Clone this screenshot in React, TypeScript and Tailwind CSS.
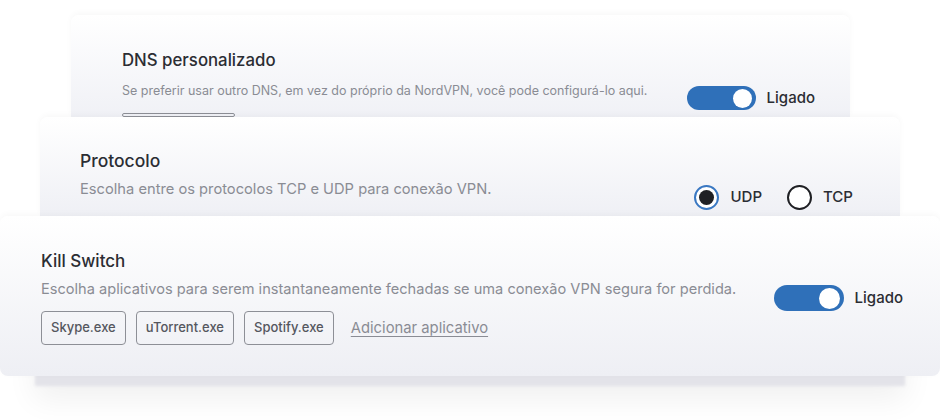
import React from 'react'

const font = { fontFamily: 'Inter, "Noto Sans", sans-serif' }

function Toggle({ w, h, knob }: { w: string; h: string; knob: string }) {
    return (
        <div className={`${w} ${h} rounded-full bg-[#2f70b9] flex items-center justify-end pr-[4px]`}>
            <div className={`${knob} rounded-full bg-white`} />
        </div>
    )
}

function Radio({ checked, label }: { checked: boolean; label: string }) {
    return (
        <div className="flex items-center gap-[11px]">
            {checked ? (
                <div className="w-[25px] h-[25px] rounded-full border-2 border-[#3a78c2] bg-white flex items-center justify-center">
                    <div className="w-[15px] h-[15px] rounded-full bg-[#1f2024]" />
                </div>
            ) : (
                <div className="w-[25px] h-[25px] rounded-full border-2 border-[#1f2024] bg-white" />
            )}
            <span className="text-[15px] font-medium text-[#2b2d33]">{label}</span>
        </div>
    )
}

export default function App() {
    return (
        <div style={font} className="w-[940px] h-[420px] bg-white flex flex-col items-center pt-[15px] overflow-hidden">
            {/* DNS card (back) */}
            <div className="w-[779px] h-[102px] ml-[-19px] rounded-t-[8px] overflow-hidden bg-gradient-to-b from-white to-[#f0f1f6] shadow-[0_-2px_6px_rgba(0,0,0,0.03)] flex justify-between pl-[51px] pr-[35px]">
                <div className="flex flex-col pt-[35px]">
                    <h3 className="text-[16.8px] leading-[21px] font-medium text-[#2b2d33]">DNS personalizado</h3>
                    <p className="mt-[12px] text-[12.5px] leading-[16px] text-[#8a8c94]">
                        Se preferir usar outro DNS, em vez do próprio da NordVPN, você pode configurá-lo aqui.
                    </p>
                    <div className="mt-[14px] w-[113px] h-[30px] rounded-[4px] border border-[#8d8f96]" />
                </div>
                <div className="flex items-center gap-[11px] mt-[71px] self-start">
                    <Toggle w="w-[69px]" h="h-[24px]" knob="w-[19px] h-[19px]" />
                    <span className="text-[15px] font-medium text-[#2b2d33]">Ligado</span>
                </div>
            </div>

            {/* Protocolo card (middle) */}
            <div className="w-[860px] h-[99px] rounded-t-[8px] overflow-hidden bg-gradient-to-b from-white to-[#eff0f5] shadow-[0_-2px_6px_rgba(0,0,0,0.03)] flex justify-between pl-[40px] pr-[47px]">
                <div className="flex flex-col pt-[32px]">
                    <h3 className="text-[17.5px] leading-[23px] font-medium text-[#2b2d33]">Protocolo</h3>
                    <p className="mt-[8px] text-[14.7px] leading-[19px] text-[#8a8c94]">
                        Escolha entre os protocolos TCP e UDP para conexão VPN.
                    </p>
                </div>
                <div className="flex items-center gap-[25px] mt-[68px] self-start">
                    <Radio checked label="UDP" />
                    <Radio checked={false} label="TCP" />
                </div>
            </div>

            {/* Kill Switch card (front) */}
            <div className="w-[940px] h-[160px] rounded-[8px] bg-gradient-to-b from-white to-[#eeeff4] shadow-[0_-2px_6px_rgba(0,0,0,0.03),0_45px_3px_-35px_#e3e3e9,0_58px_30px_-34px_rgba(0,0,0,0.06)] flex justify-between pl-[41px] pr-[37px]">
                <div className="flex flex-col pt-[34px]">
                    <h3 className="text-[17px] leading-[22px] font-medium text-[#2b2d33]">Kill Switch</h3>
                    <p className="mt-[7px] text-[14.6px] leading-[20px] text-[#8a8c94]">
                        Escolha aplicativos para serem instantaneamente fechadas se uma conexão VPN segura for perdida.
                    </p>
                    <div className="mt-[12px] flex items-center gap-[10px]">
                        {['Skype.exe', 'uTorrent.exe', 'Spotify.exe'].map((app) => (
                            <div key={app} className="h-[34px] px-[9px] rounded-[4px] border border-[#8d8f96] flex items-center text-[13px] font-medium text-[#55575e]">
                                {app}
                            </div>
                        ))}
                        <a className="ml-[7px] text-[14.8px] text-[#8a8c94] underline underline-offset-[3px]">Adicionar aplicativo</a>
                    </div>
                </div>
                <div className="flex items-center gap-[11px] mt-[69px] self-start">
                    <Toggle w="w-[70px]" h="h-[26px]" knob="w-[21px] h-[21px]" />
                    <span className="text-[15px] font-medium text-[#2b2d33]">Ligado</span>
                </div>
            </div>
        </div>
    )
}
